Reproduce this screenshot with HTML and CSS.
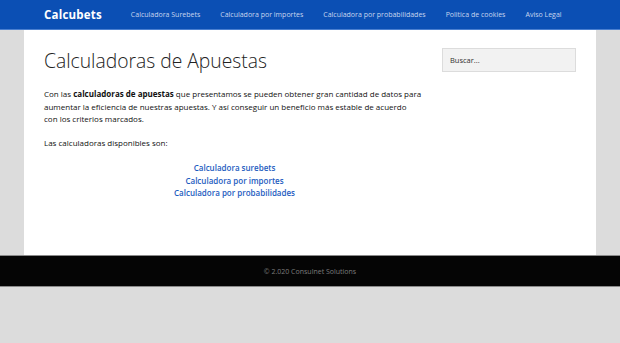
FILE: index.html
```html
<!DOCTYPE html>
<html lang="es">
<head>
    <meta charset="UTF-8">
    <meta name="viewport" content="width=device-width, initial-scale=1.0">
    <title>Calculadoras de Apuestas - Calcubets</title>
    <link rel="stylesheet" href="styles.css">
</head>
<body>
    <!-- Header -->
    <header class="site-header">
        <div class="header-inner">
            <a class="logo" href="#">Calcubets</a>
            <nav class="main-nav">
                <a href="#">Calculadora Surebets</a>
                <a href="#">Calculadora por importes</a>
                <a href="#">Calculadora por probabilidades</a>
                <a href="#">Politica de cookies</a>
                <a href="#">Aviso Legal</a>
            </nav>
        </div>
    </header>

    <!-- Content -->
    <div class="site-container">
        <main class="content">
            <h1 class="entry-title">Calculadoras de Apuestas</h1>
            <p>Con las <strong>calculadoras de apuestas</strong> que presentamos se pueden obtener gran cantidad de datos para<br>
               aumentar la eficiencia de nuestras apuestas. Y así conseguir un beneficio más estable de acuerdo<br>
               con los criterios marcados.</p>
            <p>Las calculadoras disponibles son:</p>
            <ul class="calc-links">
                <li><a href="#">Calculadora surebets</a></li>
                <li><a href="#">Calculadora por importes</a></li>
                <li><a href="#">Calculadora por probabilidades</a></li>
            </ul>
        </main>
        <aside class="sidebar">
            <input class="search-input" type="search" placeholder="Buscar...">
        </aside>
    </div>

    <!-- Footer -->
    <footer class="site-footer">
        <p>© 2.020 Consulnet Solutions</p>
    </footer>
</body>
</html>
```

FILE: styles.css
```css
/* General Styles */
body, html {
    margin: 0;
    padding: 0;
    font-family: "Open Sans", sans-serif;
    background-color: #dcdcdc;
    color: #111;
}
a {
    text-decoration: none;
}

/* Header */
.site-header {
    background-color: #0b4fb4;
    border-bottom: 1px solid #4a7fd0;
    height: 29px;
}
.header-inner {
    display: flex;
    align-items: center;
    height: 29px;
    padding-left: 44px;
}
.logo {
    color: #fff;
    font-weight: 700;
    font-size: 11.5px;
    margin-right: 19px;
    letter-spacing: 0.2px;
}
.main-nav {
    display: flex;
}
.main-nav a {
    color: #c8d6ef;
    font-size: 7px;
    padding: 0 10px;
}

/* Content */
.site-container {
    display: flex;
    width: 532px;
    margin: 0 24px;
    padding: 0 20px;
    background: #fff;
    min-height: 225px;
}
.content {
    width: 382px;
    font-size: 8px;
    line-height: 12.5px;
}
.entry-title {
    font-size: 19.3px;
    font-weight: 300;
    color: #222;
    margin: 17px 0 13px;
    line-height: 28px;
}
.content p {
    margin: 0 0 11.5px;
}
.calc-links {
    list-style: none;
    margin: 0;
    padding: 1px 0 0;
    text-align: center;
}
.calc-links a {
    color: #1d5cc0;
    font-weight: 600;
}

/* Sidebar */
.sidebar {
    margin-left: 17px;
    padding-top: 16px;
}
.search-input {
    width: 134px;
    height: 24px;
    box-sizing: border-box;
    background: #f2f2f2;
    border: 1px solid #dcdcdc;
    padding: 0 7px;
    font-family: "Open Sans", sans-serif;
    font-size: 7.5px;
    outline: none;
}
.search-input::placeholder {
    color: #333;
}

/* Footer */
.site-footer {
    background: #050505;
    border-top: 1px solid #8a8a8a;
    border-bottom: 1px solid #8a8a8a;
    height: 30px;
    display: flex;
    align-items: center;
    justify-content: center;
}
.site-footer p {
    margin: 0;
    color: #7c7c7c;
    font-size: 7px;
}
```
